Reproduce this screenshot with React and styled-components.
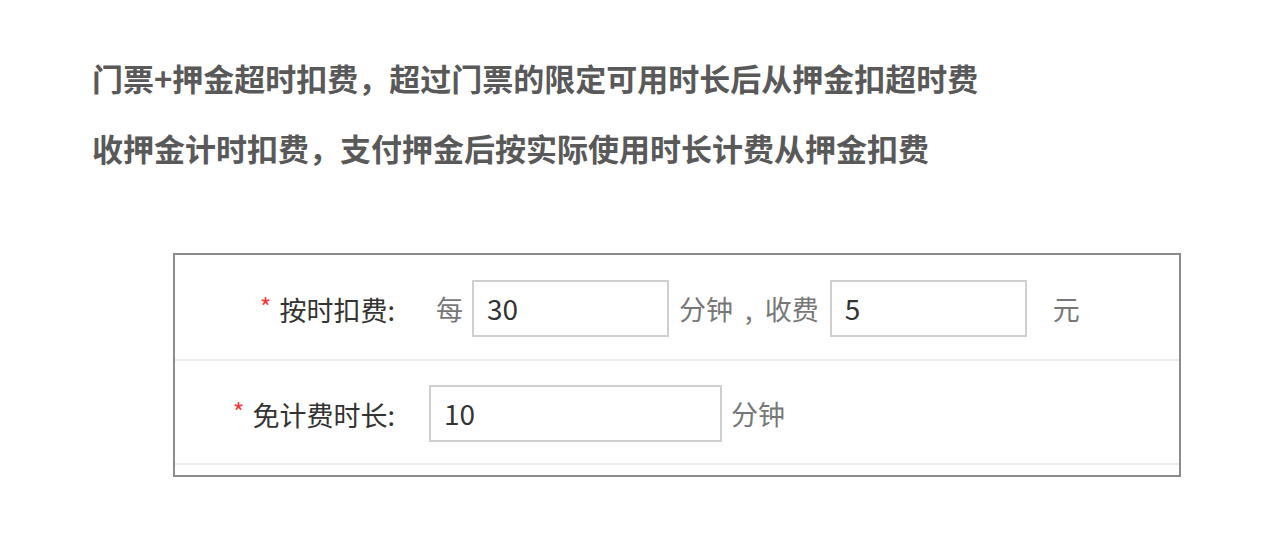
import React from 'react'
import styled, { createGlobalStyle } from 'styled-components'

const Global = createGlobalStyle`
    body {
        margin: 0;
        background: #fff;
        font-family: "Noto Sans CJK SC", "Noto Sans", sans-serif;
    }
`

const Page = styled.div`
    padding: 43px 0 0 92px;
`

const Note = styled.p`
    margin: 0;
    font-size: 31px;
    line-height: 70px;
    font-weight: 700;
    color: #595959;
`

const Panel = styled.div`
    margin: 70px 0 0 173px;
    width: 1008px;
    box-sizing: border-box;
    border: 2px solid #8c8c8c;
    padding-bottom: 10px;
`

const Row = styled.div`
    display: flex;
    align-items: center;
    box-sizing: border-box;
    height: ${p => p.$height}px;
    padding-top: 2px;
    border-bottom: 2px solid #ececec;
`

const Label = styled.div`
    width: 220px;
    flex: none;
    text-align: right;
    font-size: 27px;
    color: #333;
    margin-right: 34px;
`

const Star = styled.span`
    color: #f23b3b;
    font-size: 25px;
    margin-right: 8px;
    vertical-align: 4px;
`

const Text = styled.span`
    font-size: 27px;
    color: #777;
    margin: ${p => p.$margin || '0'};
    white-space: pre;
`

const Input = styled.input`
    box-sizing: border-box;
    width: ${p => p.$width}px;
    height: 57px;
    border: 2px solid #cfcfcf;
    padding: 0 0 0 13px;
    font-family: inherit;
    font-size: 28px;
    color: #333;
    outline: none;
    background: #fff;
`

export default function App() {
    return (
        <>
            <Global />
            <Page>
                <Note>门票+押金超时扣费，超过门票的限定可用时长后从押金扣超时费</Note>
                <Note>收押金计时扣费，支付押金后按实际使用时长计费从押金扣费</Note>
            </Page>
            <Panel>
                <Row $height={106}>
                    <Label><Star>*</Star>按时扣费:</Label>
                    <Text $margin="0 9px 0 7px">每</Text>
                    <Input $width={197} defaultValue="30" />
                    <Text $margin="0 11px 0 10px">分钟  ,  收费</Text>
                    <Input $width={197} defaultValue="5" />
                    <Text $margin="0 0 0 26px">元</Text>
                </Row>
                <Row $height={104}>
                    <Label><Star>*</Star>免计费时长:</Label>
                    <Input $width={293} defaultValue="10" />
                    <Text $margin="0 0 0 9px">分钟</Text>
                </Row>
            </Panel>
        </>
    )
}
